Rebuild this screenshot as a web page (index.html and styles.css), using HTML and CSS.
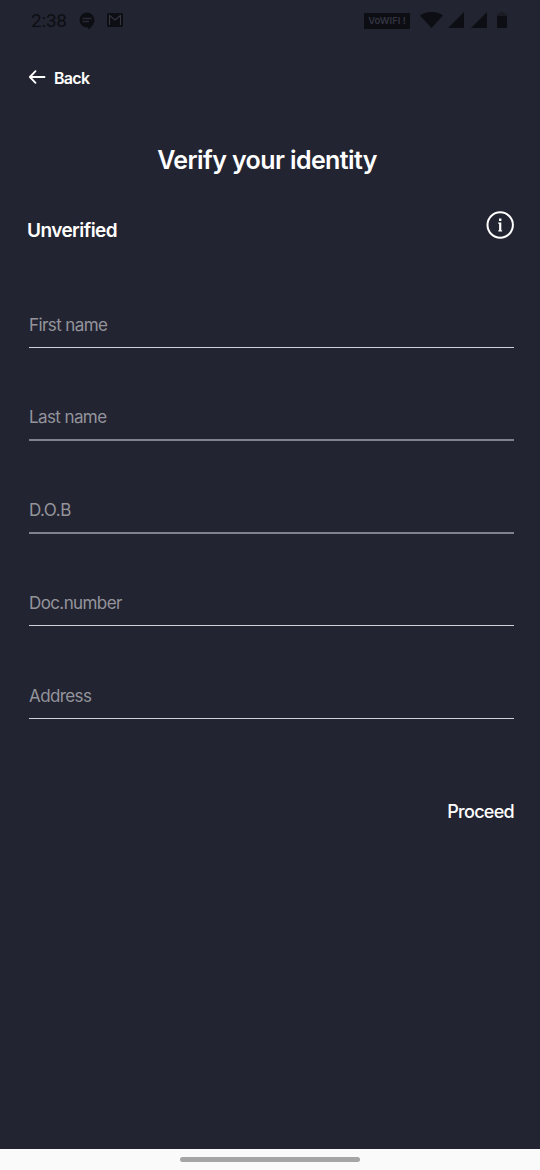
FILE: index.html
```html
<!DOCTYPE html>
<html lang="en">
<head>
<meta charset="utf-8">
<title>Verify your identity</title>
<link rel="stylesheet" href="styles.css">
</head>
<body>
<div class="screen">
  <header class="status">
    <span class="clock">2:38</span>
    <svg class="chat" width="16" height="18" viewBox="0 0 16 18"><path fill="#0d0e13" d="M8 .5a7.500 7.500 0 0 1 7.500 7.500c0 4-3 7.500-6.500 9.500v-2H8A7.500 7.500 0 0 1 8 .5z"/><path stroke="#292a35" stroke-width="1.300" d="M3.500 6.500h9M3.500 9.500h6.500"/></svg>
    <svg class="mail" width="16" height="14" viewBox="0 0 16 14"><rect width="16" height="14" rx="1.500" fill="#0d0e13"/><path d="M2.500 12V2.500L8 7l5.500-4.500V12" fill="none" stroke="#343541" stroke-width="1.200"/></svg>
    <span class="vowifi">VoWIFI !</span>
    <svg class="wifi" width="23" height="16" viewBox="0 0 23 16"><path fill="#0d0e13" d="M0 3.500C6.500-1.200 16.500-1.200 23 3.500L11.500 16z"/></svg>
    <svg class="signal" width="16" height="16" viewBox="0 0 16 16"><path fill="#0d0e13" d="M16 0v16H0z"/></svg>
    <svg class="signal second" width="16" height="16" viewBox="0 0 16 16"><path fill="#0d0e13" d="M16 0v16H0z"/></svg>
    <svg class="battery" width="10" height="16" viewBox="0 0 10 16"><path fill="#1a1b23" d="M3 0h4v1.500h3V5H0V1.500h3z"/><path fill="#0d0e13" d="M0 4h10v12H0z"/></svg>
  </header>
  <nav class="back">
    <svg width="17" height="15" viewBox="0 0 17 15" fill="none" stroke="#fff" stroke-width="1.800" stroke-linecap="round" stroke-linejoin="round"><path d="M15.500 7H1M6.500 1.200L.9 7l5.600 5.800"/></svg>
    <span class="back-label">Back</span>
  </nav>
  <h1 class="title"><span class="title-text">Verify your identity</span></h1>
  <div class="state">
    <span class="state-label">Unverified</span>
    <svg class="info" width="28" height="28" viewBox="0 0 28 28"><circle cx="14.200" cy="14" r="12.700" fill="none" stroke="#fff" stroke-width="2"/><path fill="#fff" d="M13 7.600h2.400v2.300H13zM12.200 11.600h3.100v7.600h.8v1.200h-3.800v-1.200h.8v-6.400h-.9z"/></svg>
  </div>
  <form class="fields">
    <div class="field"><label class="first">First name</label></div>
    <div class="field soft"><label class="last">Last name</label></div>
    <div class="field soft"><label class="dob">D.O.B</label></div>
    <div class="field"><label class="doc">Doc.number</label></div>
    <div class="field"><label class="address">Address</label></div>
  </form>
  <div class="actions"><span class="proceed">Proceed</span></div>
  <footer class="navbar"><div class="pill"></div></footer>
</div>
</body>
</html>
```
FILE: styles.css
```css
* { box-sizing: border-box; }
body { margin: 0; background: #232431; }
.screen {
  width: 540px; height: 1170px;
  display: flex; flex-direction: column;
  background: #232431; color: #fff;
  font-family: Inter, "Liberation Sans", sans-serif;
  white-space: nowrap; overflow: hidden;
}
svg { display: block; flex: none; }
.status { height: 40px; display: flex; align-items: center; padding: 0 32px 0 31px; color: #0d0e13; }
.clock { width: 48px; padding-top: 1px; font: 400 19px/40px Roboto, sans-serif; letter-spacing: -0.2px; }
.chat { margin-top: 1px; }
.mail { margin-left: 12px; }
.vowifi { margin-left: auto; width: 46px; height: 16px; margin-top: 1px; background: #0d0e13; color: #343541; font: 600 9.5px/16px Inter, sans-serif; text-align: center; }
.wifi { margin-left: 10px; }
.signal { margin-left: 5px; }
.second { margin-left: 7px; }
.battery { margin-left: 10px; margin-right: 1px; }
.back { height: 75px; display: flex; align-items: center; padding-left: 29px; gap: 8px; }
.back-label { font-size: 16px; font-weight: 600; letter-spacing: -0.7px; }
.title { height: 90px; margin: 0; padding-right: 6px; text-align: center; font-size: 25px; line-height: 90px; font-weight: 600; letter-spacing: -0.6px; }
.state { height: 50px; display: flex; justify-content: space-between; padding: 6px 26px 0 26px; }
.state-label { padding: 1px 0 0 1px; font-size: 19px; line-height: 37px; font-weight: 600; letter-spacing: -0.55px; }
.fields { margin: 0; height: 464px; padding: 0 26px 0 29px; display: grid; grid-template-rows: 93px 93px 93px 92px 93px; }
.field { display: flex; align-items: flex-end; padding-bottom: 8px; border-bottom: 1px solid #d0d1d8; color: #94949c; font-size: 17px; line-height: 28px; letter-spacing: -0.6px; }
.soft { border-bottom: 2px solid #82828e; }
.dob { letter-spacing: -0.4px; }
.doc, .address { letter-spacing: -0.6px; }
.actions { height: 430px; padding: 75px 26px 0 0; text-align: right; font-size: 18px; line-height: 36px; font-weight: 500; letter-spacing: -0.7px; }
.navbar { height: 21px; background: #fafafa; padding-top: 8px; }
.pill { width: 180px; height: 5px; margin: 0 auto; border-radius: 3px; background: #a5a5a5; }
```
